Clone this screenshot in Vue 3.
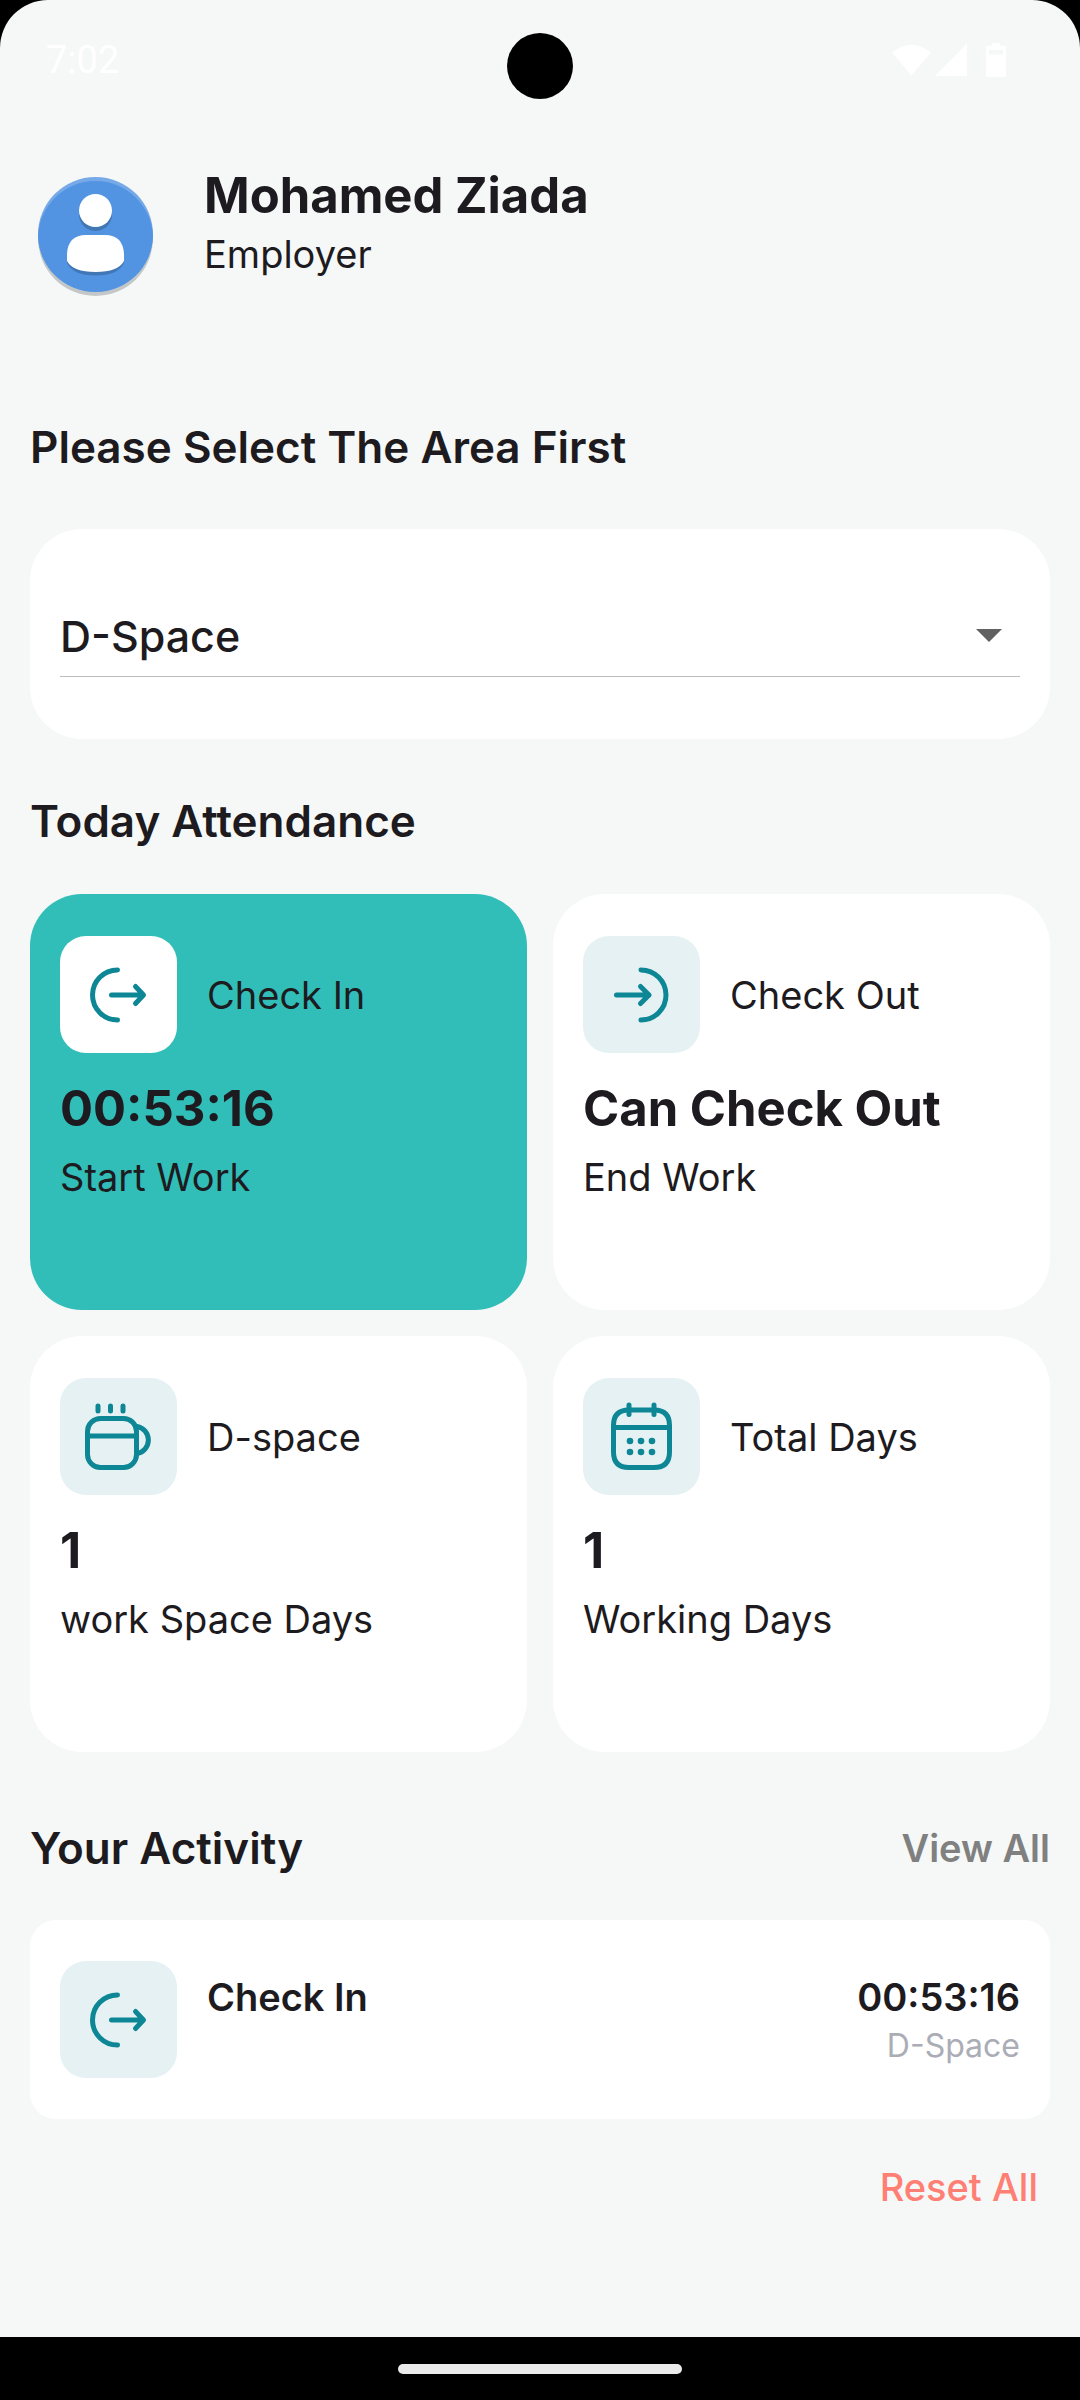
<script setup>
import { ref } from 'vue'

const area = ref('D-Space')

const cards = [
  { icon: 'in', label: 'Check In', value: '00:53:16', note: 'Start Work', active: true },
  { icon: 'out', label: 'Check Out', value: 'Can Check Out', note: 'End Work' },
  { icon: 'cup', label: 'D-space', value: '1', note: 'work Space Days' },
  { icon: 'calendar', label: 'Total Days', value: '1', note: 'Working Days' },
]

const activities = ref([{ title: 'Check In', time: '00:53:16', place: 'D-Space' }])

// Stroke paths on a 117 x 117 tile
const icons = {
  in: ['M57.5 34A25 25 0 0 0 57.5 84', 'M51.5 59H83M75.5 50.5L83.5 59L75.5 67.5'],
  out: ['M58 34A25 25 0 0 1 58 84', 'M33.5 59H66M57.5 50.5L66 59L57.5 67.5'],
  cup: [
    'M40.5 40.5H63.5A13 13 0 0 1 76.5 53.5V76.5A13 13 0 0 1 63.5 89.5H40.5A13 13 0 0 1 27.5 76.5V53.5A13 13 0 0 1 40.5 40.5Z',
    'M27.5 58H76.5',
    'M38 28V33M50.5 28V33M63 28V33',
    'M77 48.5A13.7 13.7 0 0 1 77 75.5',
  ],
  calendar: [
    'M46 32H71Q86.5 32 86.5 47.5V74Q86.5 89.5 71 89.5H46Q30.5 89.5 30.5 74V47.5Q30.5 32 46 32Z',
    'M30.5 49.5H86.5',
    'M46 27V36.5M71 27V36.5',
  ],
}
const dots = [47, 58, 69].flatMap((x) => [63, 74].map((y) => ({ x, y })))
</script>

<template>
  <div class="screen">
    <div class="app">
      <div class="status-bar">
        <span class="clock">7:02</span>
        <span class="camera"></span>
        <svg class="status-icons" viewBox="0 0 116 36" aria-hidden="true">
          <path d="M0 10.5A29 29 0 0 1 39 10.5L19.5 33.5Z" />
          <path d="M43 34L75 1.5V34Z" />
          <path
            fill-rule="evenodd"
            d="M100 1H108V4H112Q114 4 114 6V33Q114 35 112 35H96Q94 35 94 33V6Q94 4 96 4H100ZM97 8V12.5H111V8Z"
          />
        </svg>
      </div>

      <header class="profile">
        <svg class="avatar" viewBox="0 0 132 120" aria-hidden="true">
          <circle cx="65.5" cy="61.5" r="57.5" fill="#c4c7c8" />
          <circle cx="65.5" cy="57.5" r="57.5" fill="#76a9e8" />
          <path d="M8.035 59.5A57.5 57.5 0 0 1 122.965 59.5A57.5 57.5 0 0 1 8.035 59.5Z" fill="#5294e2" />
          <g fill="#4277b5">
            <circle cx="65.5" cy="37.5" r="16.5" />
            <path d="M37 78Q38 61.5 56 61.5H75Q93 61.5 94 78V86Q88 98.5 65.5 98.5Q43 98.5 37 86Z" />
          </g>
          <g fill="#ffffff">
            <circle cx="65.5" cy="33.5" r="16.5" />
            <path d="M37 77Q38 58 56 58H75Q93 58 94 77V84Q88 95 65.5 95Q43 95 37 84Z" />
          </g>
        </svg>
        <div>
          <h1 class="strong-text">Mohamed Ziada</h1>
          <p class="body-text">Employer</p>
        </div>
      </header>

      <main>
        <label class="heading" for="area">Please Select The Area First</label>
        <div class="area-card">
          <div class="select-box">
            <select id="area" v-model="area">
              <option>D-Space</option>
            </select>
            <svg class="caret" viewBox="0 0 26 13" aria-hidden="true"><path d="M0 0H26L13 13Z" /></svg>
          </div>
        </div>

        <h2 class="heading">Today Attendance</h2>
        <section class="grid">
          <article v-for="card in cards" :key="card.label" class="card" :class="{ active: card.active }">
            <div class="card-top">
              <svg class="tile" viewBox="0 0 117 117" aria-hidden="true">
                <path v-for="d in icons[card.icon]" :key="d" :d="d" />
                <template v-if="card.icon === 'calendar'">
                  <circle v-for="p in dots" :key="p.x + '-' + p.y" :cx="p.x" :cy="p.y" r="3.3" />
                </template>
              </svg>
              <h3 class="body-text">{{ card.label }}</h3>
            </div>
            <p class="strong-text">{{ card.value }}</p>
            <p class="body-text note">{{ card.note }}</p>
          </article>
        </section>

        <div class="activity-head">
          <h2 class="heading">Your Activity</h2>
          <a class="view-all" href="#">View All</a>
        </div>
        <ul class="activity-list">
          <li v-for="item in activities" :key="item.time" class="activity">
            <svg class="tile" viewBox="0 0 117 117" aria-hidden="true">
              <path v-for="d in icons.in" :key="d" :d="d" />
            </svg>
            <strong class="activity-title">{{ item.title }}</strong>
            <div class="activity-meta">
              <strong>{{ item.time }}</strong>
              <span class="place">{{ item.place }}</span>
            </div>
          </li>
        </ul>
        <div class="actions">
          <button type="button" class="reset">Reset All</button>
        </div>
      </main>
    </div>
    <div class="nav-bar"><span class="nav-pill"></span></div>
  </div>
</template>

<style>
body {
  margin: 0;
  background: #000000;
}
</style>

<style scoped>
.screen {
  display: flex;
  flex-direction: column;
  min-height: 100vh;
  background: #000000;
  color: #1d1b20;
  font-family: Inter, "Noto Sans", sans-serif;
  font-size: 38px;
  line-height: 52px;
}

.app {
  flex: 1;
  background: #f5f8f7;
  border-radius: 48px 48px 0 0;
}

h1,
h2,
h3,
p,
ul {
  margin: 0;
  padding: 0;
}

.status-bar {
  position: relative;
  display: flex;
  align-items: center;
  justify-content: space-between;
  height: 120px;
  padding: 0 72px 0 46px;
}

.clock {
  color: #ffffff;
  font-family: Roboto, sans-serif;
}

.camera {
  position: absolute;
  top: 33px;
  left: 50%;
  width: 66px;
  height: 66px;
  margin-left: -33px;
  border-radius: 50%;
  background: #000000;
}

.status-icons {
  width: 116px;
  height: 36px;
  fill: #ffffff;
}

.profile {
  display: flex;
  align-items: flex-start;
  gap: 42px;
  padding: 44px 30px 122px;
}

.avatar {
  flex: none;
  width: 132px;
  height: 120px;
  margin-top: 13px;
}

.strong-text {
  font-size: 49px;
  line-height: 64px;
  font-weight: 700;
}

.body-text {
  font-size: 38px;
  line-height: 52px;
  font-weight: 400;
}

main {
  padding: 0 30px;
}

.heading {
  display: block;
  font-size: 44px;
  line-height: 56px;
  font-weight: 600;
}

.area-card {
  margin: 54px 0;
  padding: 66px 30px 62px;
  border-radius: 52px;
  background: #ffffff;
}

.select-box {
  position: relative;
}

select {
  display: block;
  width: 100%;
  height: 82px;
  padding: 0;
  border: 0;
  border-bottom: 1px solid #bdbdbd;
  border-radius: 0;
  outline: 0;
  appearance: none;
  background: transparent;
  color: inherit;
  font-family: inherit;
  font-size: 43px;
  font-weight: 500;
}

.caret {
  position: absolute;
  top: 34px;
  right: 18px;
  width: 26px;
  height: 13px;
  fill: #616161;
  pointer-events: none;
}

.grid {
  display: grid;
  grid-template-columns: 1fr 1fr;
  gap: 26px;
  margin: 45px 0 68px;
}

.card {
  box-sizing: border-box;
  min-height: 416px;
  padding: 42px 30px;
  border-radius: 52px;
  background: #ffffff;
}

.card.active {
  background: #32beb8;
}

.card-top {
  display: flex;
  align-items: center;
  gap: 30px;
  margin-bottom: 24px;
}

.note {
  margin-top: 10px;
}

.tile {
  flex: none;
  width: 117px;
  height: 117px;
  border-radius: 26px;
  background: #e6f1f3;
  fill: none;
  stroke: #0d8795;
  stroke-width: 5;
  stroke-linecap: round;
  stroke-linejoin: round;
}

.tile circle {
  fill: #0d8795;
  stroke: none;
}

.active .tile {
  background: #ffffff;
}

.activity-head {
  display: flex;
  align-items: center;
  justify-content: space-between;
  margin-bottom: 44px;
}

.view-all {
  color: #808080;
  font-weight: 600;
  text-decoration: none;
}

.activity-list {
  list-style: none;
}

.activity {
  display: flex;
  align-items: flex-start;
  gap: 30px;
  padding: 41px 30px;
  border-radius: 26px;
  background: #ffffff;
}

.activity strong {
  font-weight: 600;
}

.activity-title,
.activity-meta {
  padding-top: 10px;
}

.activity-meta {
  display: flex;
  flex-direction: column;
  align-items: flex-end;
  margin-left: auto;
}

.place {
  color: #abadb6;
  font-size: 32px;
  line-height: 46px;
}

.actions {
  display: flex;
  justify-content: flex-end;
  padding: 42px 12px;
}

.reset {
  padding: 0;
  border: 0;
  background: none;
  color: #ff7f74;
  font-family: inherit;
  font-size: 38px;
  font-weight: 500;
  line-height: 52px;
}

.nav-bar {
  display: flex;
  align-items: center;
  justify-content: center;
  height: 63px;
}

.nav-pill {
  width: 284px;
  height: 10px;
  border-radius: 5px;
  background: #ebebeb;
}
</style>
